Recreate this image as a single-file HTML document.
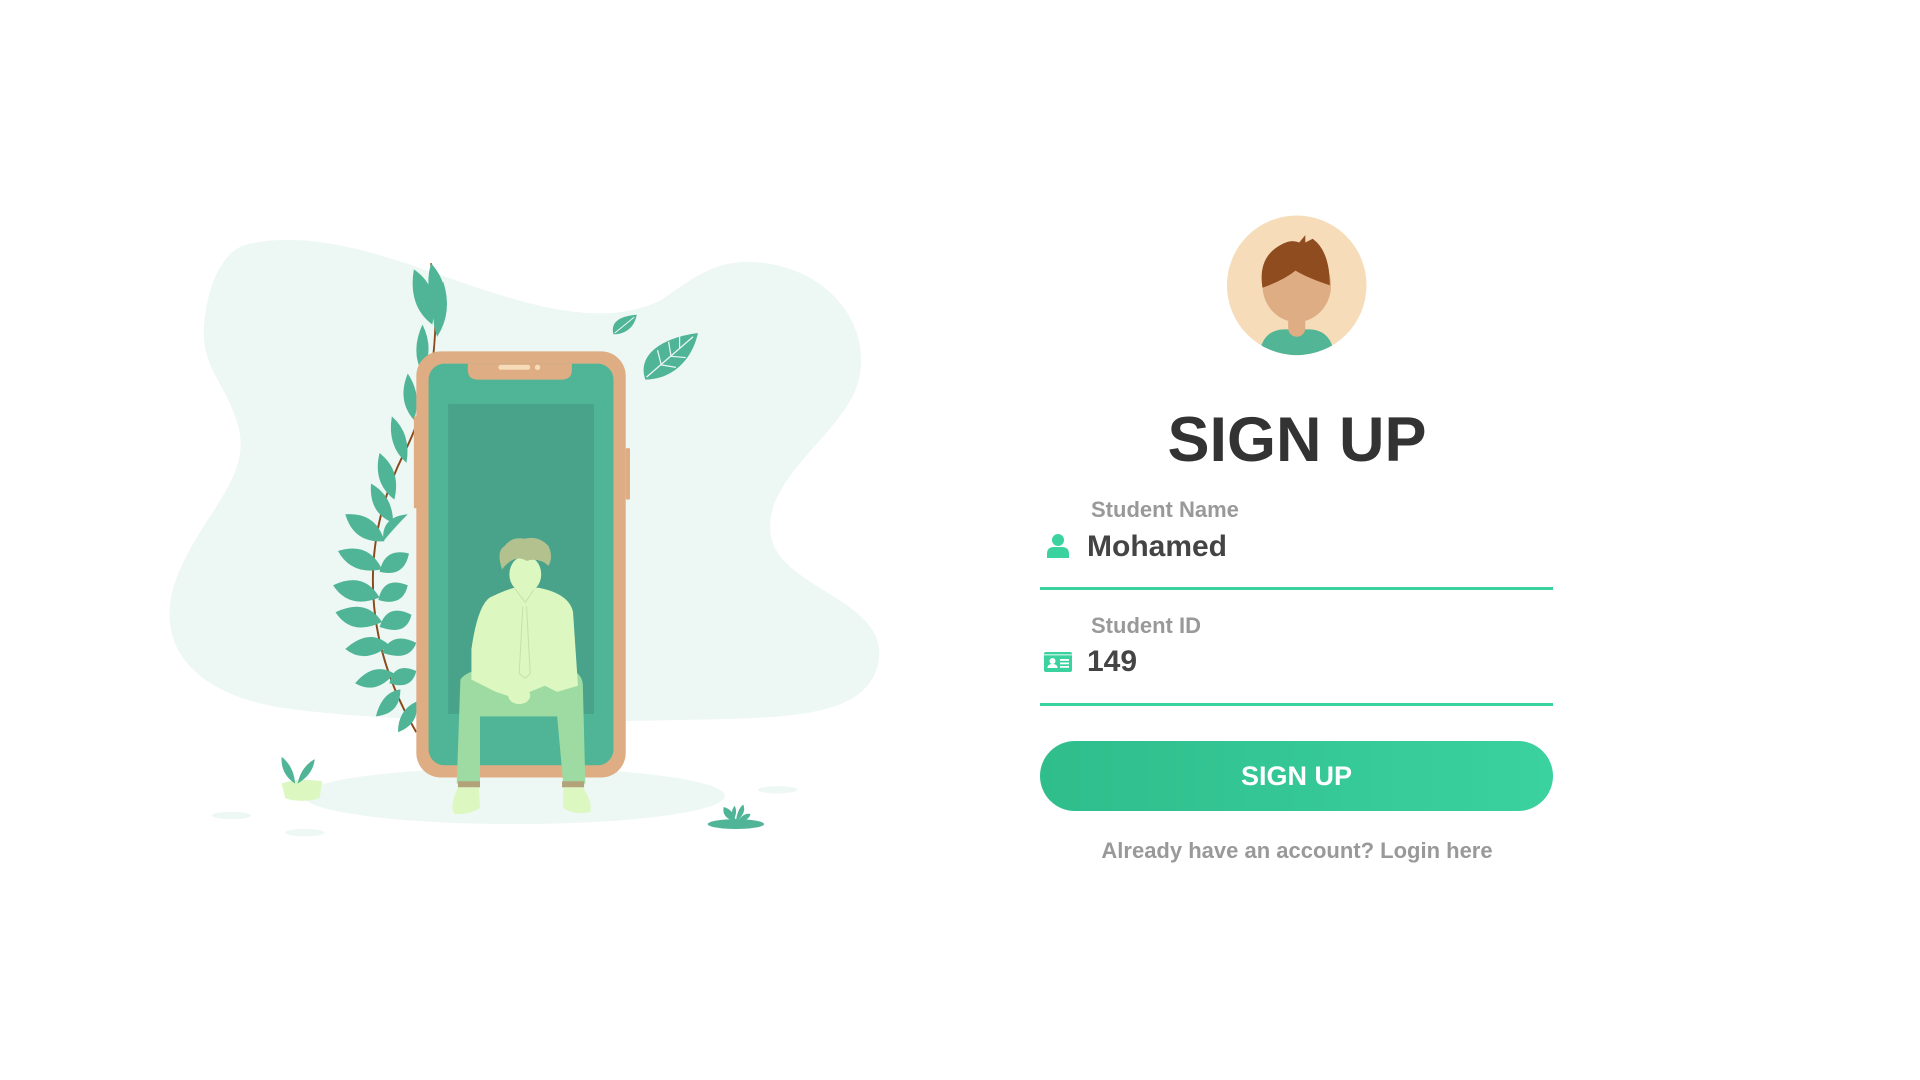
<!DOCTYPE html>
<html><head><meta charset="utf-8"><style>
html,body{margin:0;padding:0;background:#fff;width:1920px;height:1080px;overflow:hidden;font-family:"Liberation Sans",sans-serif}
.ill{position:absolute;left:0;top:0}
.t{position:absolute;white-space:nowrap}
</style></head><body>
<svg class="ill" width="1920" height="1080" viewBox="0 0 1568 882">
<path d="M200 200 C260 185 330 215 390 235 C450 255 500 265 540 245 C570 225 590 205 640 218 C690 232 715 280 698 320 C680 360 620 395 630 440 C640 480 720 490 718 535 C715 580 660 585 600 587 C480 590 330 592 230 578 C150 565 125 520 145 470 C165 420 205 390 195 350 C185 310 160 300 168 255 C172 225 185 205 200 200 Z" fill="#edf7f3"/>
<ellipse cx="420" cy="650" rx="172" ry="23" fill="#edf7f3"/>
<ellipse cx="189" cy="666" rx="16" ry="3" fill="#edf7f3"/>
<ellipse cx="249" cy="680" rx="16" ry="3" fill="#edf7f3"/>
<ellipse cx="635" cy="645" rx="16" ry="3" fill="#edf7f3"/>
<path d="M340 598 C300 530 290 450 330 370 C350 330 362 280 352 215" stroke="#8c4a1c" stroke-width="1.6" fill="none"/>
<g fill="#4fb596">
<path d="M352 215 q18 20 8 45 q-15 -20 -8 -45z"/>
<path d="M338 220 q22 15 15 45 q-20 -15 -15 -45z"/>
<path d="M362 230 q8 25 -5 45 q-8 -20 5 -45z"/>
<path d="M345 265 q10 20 0 40 q-10 -18 0 -40z"/>
<path d="M333 305 q12 18 5 38 q-14 -16 -5 -38z"/>
<path d="M320 340 q16 14 12 38 q-16 -14 -12 -38z"/>
<path d="M310 370 q18 14 12 38 q-18 -14 -12 -38z"/>
<path d="M303 395 q18 10 18 32 q-20 -8 -18 -32z"/>
<path d="M282 420 q25 -2 32 22 q-25 2 -32 -22z"/>
<path d="M333 420 q-10 10 -20 22 q-2 -20 20 -22z"/>
<path d="M276 450 q25 -8 36 15 q-25 5 -36 -15z"/>
<path d="M334 452 q-20 -5 -24 15 q20 5 24 -15z"/>
<path d="M272 478 q25 -12 38 10 q-25 10 -38 -10z"/>
<path d="M333 478 q-20 -8 -24 12 q20 6 24 -12z"/>
<path d="M274 500 q25 -12 38 8 q-25 12 -38 -8z"/>
<path d="M336 502 q-20 -10 -26 10 q22 8 26 -10z"/>
<path d="M282 530 q20 -18 36 -3 q-20 16 -36 3z"/>
<path d="M340 525 q-20 -10 -28 8 q22 8 28 -8z"/>
<path d="M290 558 q15 -18 32 -8 q-15 18 -32 8z"/>
<path d="M340 548 q-18 -8 -22 10 q18 6 22 -10z"/>
<path d="M307 585 q5 -20 20 -22 q0 20 -20 22z"/>
<path d="M325 598 q0 -18 15 -25 q3 18 -15 25z"/>
</g>
<path d="M527 310 C520 290 540 276 570 272 C565 295 548 310 527 310Z" fill="#4fb596"/>
<path d="M528 308 L566 275 M540 298 l-3 -12 M548 291 l-2 -12 M555 284 l0 -9 M540 298 l12 2 M548 291 l12 1" stroke="#edf7f3" stroke-width="1" fill="none"/>
<path d="M501 273 C498 262 508 258 520 257 C518 268 510 273 501 273Z" fill="#4fb596"/>
<path d="M502 272 L518 259" stroke="#edf7f3" stroke-width="0.8"/>
<rect x="511" y="366" width="3.5" height="42" rx="1" fill="#dfad83"/>
<rect x="338" y="340" width="3" height="75" fill="#dfad83"/>
<rect x="340" y="287" width="171" height="348" rx="20" fill="#dfad83"/>
<rect x="350" y="297" width="151" height="328" rx="13" fill="#50b496"/>
<path d="M382 297 h85 v5 q0 8 -8 8 h-69 q-8 0 -8 -8z" fill="#dfad83"/>
<rect x="407" y="298" width="26" height="4" rx="2" fill="#f6dcb9"/>
<circle cx="439" cy="300" r="2.2" fill="#f6dcb9"/>
<rect x="366" y="330" width="119" height="253" fill="#48a38a"/>
<path d="M376 555 Q380 548 400 545 L460 545 Q476 548 476 560 L478 640 L460 640 L455 585 L392 585 L392 640 L373 640 Z" fill="#9edba3"/>
<rect x="374" y="638" width="18" height="5" fill="#b3a37a"/>
<rect x="459" y="638" width="18" height="5" fill="#b3a37a"/>
<path d="M374 643 h17 l1 17 q-8 5 -20 5 q-6 -4 2 -22z" fill="#dcf7c0"/>
<path d="M460 643 h16 q8 12 6 20 q-12 3 -22 -3z" fill="#dcf7c0"/>
<path d="M400 488 Q412 482 420 480 L440 480 Q465 485 468 500 L472 560 L455 565 L445 560 L420 570 L405 565 L385 555 L385 530 Q390 495 400 488Z" fill="#dcf7c0"/>
<path d="M420 480 l9 12 l8 -12 M427 495 l-3 55 l5 4 l4 -4 l-3 -55" stroke="#c4e3a7" stroke-width="0.8" fill="none"/>
<ellipse cx="424" cy="568" rx="9" ry="7" fill="#dcf7c0"/>
<ellipse cx="429" cy="469" rx="13" ry="15" fill="#dcf7c0"/>
<path d="M410 465 Q405 450 412 446 Q418 438 428 440 Q440 437 448 446 Q452 455 448 462 Q440 455 430 458 Q420 452 410 465Z" fill="#b3c18e"/>
<path d="M230 640 q12 -5 33 -2 l-2 14 q-15 4 -28 0z" fill="#dcf7c0"/>
<path d="M241 640 q-12 -8 -11 -22 q10 8 11 22z M243 640 q3 -14 14 -20 q-1 12 -14 20z" fill="#4fb596"/>
<ellipse cx="601" cy="673" rx="23" ry="4" fill="#4fb596"/>
<path d="M601 671 q-12 -3 -10 -12 q8 2 10 12z M601 671 q1 -10 6 -14 q3 7 -6 14z M602 671 q6 -8 11 -6 q-2 6 -11 6z M598 671 q-2 -8 2 -13 q3 6 -2 13z" fill="#4fb596"/>
<circle cx="1059" cy="233" r="57" fill="#f6dcb9"/>
<clipPath id="ac"><circle cx="1059" cy="233" r="57"/></clipPath>
<g clip-path="url(#ac)">
<path d="M1028 292 q2 -22 20 -23 h22 q18 1 20 23z" fill="#52b596"/>
<rect x="1052" y="255" width="14" height="20" rx="7" fill="#dfad83"/>
<ellipse cx="1059" cy="233" rx="28" ry="30" fill="#dfad83"/>
<path d="M1031 235 q-4 -25 15 -35 q8 -5 15 -2 l5 -6 l0 6 l6 -3 q14 10 14 38 q-18 -6 -28 -12 q-10 8 -27 14z" fill="#8f4d1f"/>
</g>
</svg>
<div class="t" style="left:1297px;top:400px;transform:translateX(-50%);font-size:63px;font-weight:bold;color:#333;line-height:80px">SIGN UP</div>
<div class="t" style="left:1091px;top:497px;font-size:22px;font-weight:bold;color:#999">Student Name</div>
<svg style="position:absolute;left:1047px;top:534px" width="22" height="24" viewBox="0 0 22 24"><circle cx="11" cy="6" r="6" fill="#3ad29f"/><path d="M0 24 v-4 q0 -7 7 -7 h8 q7 0 7 7 v4z" fill="#3ad29f"/></svg>
<div class="t" style="left:1087px;top:530px;font-size:30px;font-weight:bold;color:#444">Mohamed</div>
<div style="position:absolute;left:1040px;top:587px;width:513px;height:3px;background:#3ad29f"></div>
<div class="t" style="left:1091px;top:613px;font-size:22px;font-weight:bold;color:#999">Student ID</div>
<svg style="position:absolute;left:1044px;top:652px" width="28" height="20" viewBox="0 0 28 20"><rect width="28" height="20" rx="2" fill="#3ad29f"/><rect x="0" y="2" width="28" height="1.5" fill="#fff" opacity=".6"/><circle cx="8.5" cy="9" r="3" fill="#fff"/><path d="M3.5 16 q0 -4 5 -4 q5 0 5 4z" fill="#fff"/><rect x="16" y="7" width="9" height="1.8" fill="#fff"/><rect x="16" y="10.5" width="9" height="1.8" fill="#fff"/><rect x="16" y="14" width="9" height="1.8" fill="#fff"/></svg>
<div class="t" style="left:1087px;top:645px;font-size:30px;font-weight:bold;color:#444">149</div>
<div style="position:absolute;left:1040px;top:703px;width:513px;height:3px;background:#3ad29f"></div>
<div style="position:absolute;left:1040px;top:741px;width:513px;height:70px;border-radius:35px;background:linear-gradient(90deg,#2fbd8c,#3ad29f);color:#fff;font-size:27px;font-weight:bold;text-align:center;line-height:70px">SIGN UP</div>
<div class="t" style="left:1297px;top:838px;transform:translateX(-50%);font-size:22px;font-weight:bold;color:#999">Already have an account? Login here</div>
</body></html>
